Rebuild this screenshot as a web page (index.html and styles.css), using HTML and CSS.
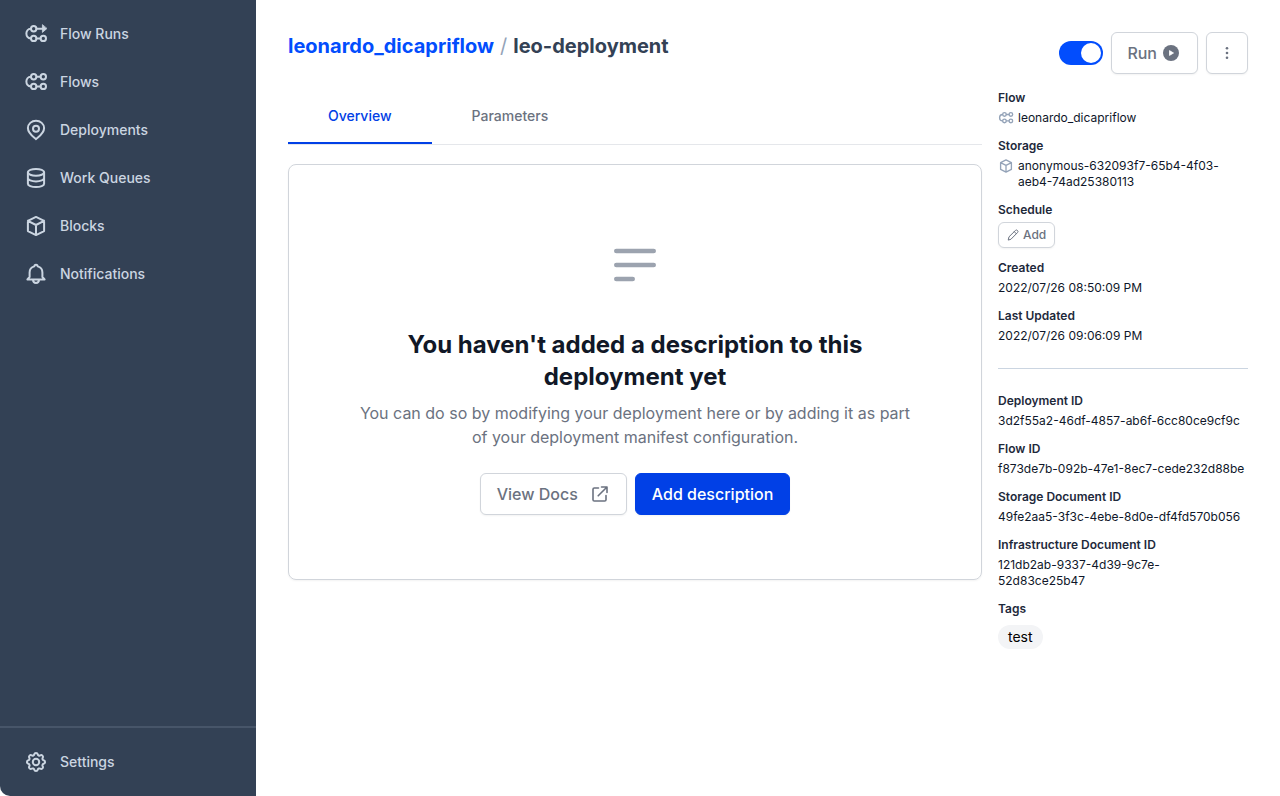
FILE: index.html
```html
<!DOCTYPE html>
<html lang="en">
<head>
<meta charset="utf-8">
<meta name="viewport" content="width=device-width, initial-scale=1">
<title>leo-deployment</title>
<link rel="stylesheet" href="styles.css">
</head>
<body>
<svg class="sprite" aria-hidden="true">
  <symbol id="flow" viewBox="0 0 24 24"><path d="M6.8 6.7C.9 6.9.9 16.2 6.8 16.4M12.6 6.7h3.8M12.6 16.4h3.8"/><circle cx="9.7" cy="6.7" r="2.7"/><circle cx="19.3" cy="6.7" r="2.7"/><circle cx="9.7" cy="16.4" r="2.7"/><circle cx="19.3" cy="16.4" r="2.7"/></symbol>
  <symbol id="flow-run" viewBox="0 0 24 24"><path d="M6.8 6.7C.9 6.9.9 16.2 6.8 16.4M12.6 6.7h6M12.6 16.4h3.8"/><path d="M18.4 3v7.400l4.300-3.700z" fill="currentColor" stroke-width=".8"/><circle cx="9.7" cy="6.7" r="2.7"/><circle cx="9.7" cy="16.4" r="2.7"/><circle cx="19.3" cy="16.4" r="2.7"/></symbol>
  <symbol id="pin" viewBox="0 0 24 24"><path d="M12 21.2c-1.2-1.5-8.1-5.2-8.1-11.100a8.1 7.400 0 0 1 16.200 0c0 5.900-6.900 9.600-8.100 11.100z"/><circle cx="12" cy="10.800" r="3"/></symbol>
  <symbol id="database" viewBox="0 0 24 24"><ellipse cx="12" cy="6.300" rx="8.100" ry="3.400"/><path d="M3.900 6.300v11.400c0 1.900 3.600 3.400 8.100 3.400s8.100-1.500 8.100-3.400V6.300M3.900 12c0 1.900 3.600 3.400 8.100 3.400s8.100-1.500 8.100-3.400"/></symbol>
  <symbol id="cube" viewBox="0 0 24 24"><path d="M12 2.900l8.100 4v10.200L12 21.100l-8.100-4V6.900zM3.900 6.900L12 11l8.100-4.100M12 11v10.100"/></symbol>
  <symbol id="bell" viewBox="0 0 24 24"><path d="M3.400 17.400h17.200L18.400 15v-4.500c0-3.200-1.800-5.300-4.700-6.100-.1-2.100-3.300-2.100-3.400 0-2.900.8-4.700 2.900-4.700 6.100V15zM9 17.600c0 4.600 6 4.600 6 0"/></symbol>
  <symbol id="gear" viewBox="0 0 24 24"><path d="M10.300 4.300c.4-1.800 3-1.800 3.400 0a1.700 1.700 0 0 0 2.600 1.100c1.500-1 3.300.8 2.400 2.400a1.700 1.700 0 0 0 1 2.500c1.800.4 1.800 3 0 3.400a1.700 1.700 0 0 0-1 2.600c.9 1.500-.9 3.300-2.400 2.400a1.700 1.700 0 0 0-2.600 1c-.4 1.800-3 1.800-3.400 0a1.700 1.700 0 0 0-2.600-1c-1.500.9-3.300-.9-2.400-2.400a1.700 1.700 0 0 0-1-2.600c-1.800-.4-1.800-3 0-3.400a1.700 1.700 0 0 0 1-2.500c-.9-1.600.9-3.400 2.400-2.400a1.700 1.700 0 0 0 2.600-1.100z"/><circle cx="12" cy="12" r="3.200"/></symbol>
</svg>

<div class="app">
  <nav class="sidebar" aria-label="Main">
    <div class="sidebar-group">
      <a class="nav-item" href="#"><svg class="icon"><use href="#flow-run"/></svg>Flow Runs</a>
      <a class="nav-item" href="#"><svg class="icon"><use href="#flow"/></svg>Flows</a>
      <a class="nav-item" href="#"><svg class="icon"><use href="#pin"/></svg>Deployments</a>
      <a class="nav-item" href="#"><svg class="icon"><use href="#database"/></svg>Work Queues</a>
      <a class="nav-item" href="#"><svg class="icon"><use href="#cube"/></svg>Blocks</a>
      <a class="nav-item" href="#"><svg class="icon"><use href="#bell"/></svg>Notifications</a>
    </div>
    <div class="sidebar-group sidebar-footer">
      <a class="nav-item" href="#"><svg class="icon"><use href="#gear"/></svg>Settings</a>
    </div>
  </nav>

  <main class="page">
    <header class="page-header">
      <h1 class="title"><a class="title-link" href="#">leonardo_dicapriflow</a><span class="title-slash">/</span>leo-deployment</h1>
      <div class="actions">
        <input class="toggle" type="checkbox" role="switch" aria-label="Deployment active" checked>
        <button class="button button-run" type="button">Run <svg class="icon-small" viewBox="0 0 16 16"><circle cx="8" cy="8" r="8" fill="currentColor"/><path d="M6.500 5.600v4.800L10.500 8z" fill="#fff" stroke="#fff" stroke-width=".8" stroke-linejoin="round"/></svg></button>
        <button class="button button-square" type="button" aria-label="More actions"><svg class="icon-small" viewBox="0 0 16 16" fill="currentColor"><circle cx="8" cy="3.300" r="1.300"/><circle cx="8" cy="8" r="1.300"/><circle cx="8" cy="12.700" r="1.300"/></svg></button>
      </div>
    </header>

    <div class="columns">
      <section class="content">
        <div class="tabs" role="tablist">
          <button class="tab tab-active" type="button" role="tab" aria-selected="true">Overview</button>
          <button class="tab" type="button" role="tab" aria-selected="false">Parameters</button>
        </div>
        <div class="card">
          <svg class="card-icon" viewBox="0 0 24 24"><path d="M4 6h16M4 12h16M4 18h7"/></svg>
          <h2 class="card-title">You haven't added a description to this deployment yet</h2>
          <p class="card-text">You can do so by modifying your deployment here or by adding it as part of your deployment manifest configuration.</p>
          <div class="card-actions">
            <a class="button button-docs" href="#">View Docs <svg class="icon-link" viewBox="0 0 20 20"><path d="M8.500 4H4.300A1.300 1.300 0 0 0 3 5.300v10.400A1.300 1.300 0 0 0 4.300 17h10.400a1.300 1.300 0 0 0 1.300-1.300v-4.200M11.500 3H17v5.500M17 3l-8.800 8.800"/></svg></a>
            <button class="button button-primary" type="button">Add description</button>
          </div>
        </div>
      </section>

      <aside class="details">
        <dl class="facts">
          <div class="fact"><dt>Flow</dt><dd class="with-icon"><svg class="icon-fact"><use href="#flow"/></svg><span>leonardo_dicapriflow</span></dd></div>
          <div class="fact"><dt>Storage</dt><dd class="with-icon"><svg class="icon-fact"><use href="#cube"/></svg><span>anonymous-632093f7-65b4-4f03-aeb4-74ad25380113</span></dd></div>
          <div class="fact"><dt>Schedule</dt><dd><button class="button button-small" type="button"><svg class="icon-pencil" viewBox="0 0 12 12"><path d="M1.300 10.700l.7-2.900L8.400 1.500a1.200 1.200 0 0 1 2.100 2.100L4.200 10zM7.300 2.700l2 2"/></svg>Add</button></dd></div>
          <div class="fact"><dt>Created</dt><dd>2022/07/26 08:50:09 PM</dd></div>
          <div class="fact"><dt>Last Updated</dt><dd>2022/07/26 09:06:09 PM</dd></div>
        </dl>
        <hr class="divider">
        <dl class="facts">
          <div class="fact"><dt>Deployment ID</dt><dd>3d2f55a2-46df-4857-ab6f-6cc80ce9cf9c</dd></div>
          <div class="fact"><dt>Flow ID</dt><dd>f873de7b-092b-47e1-8ec7-cede232d88be</dd></div>
          <div class="fact"><dt>Storage Document ID</dt><dd>49fe2aa5-3f3c-4ebe-8d0e-df4fd570b056</dd></div>
          <div class="fact"><dt>Infrastructure Document ID</dt><dd>121db2ab-9337-4d39-9c7e-52d83ce25b47</dd></div>
          <div class="fact fact-tags"><dt>Tags</dt><dd><span class="tag">test</span></dd></div>
        </dl>
      </aside>
    </div>
  </main>
</div>
</body>
</html>
```
FILE: styles.css
```css
*, *::before { box-sizing: border-box; }

body {
  margin: 0;
  background: #fff;
  color: #0f172a;
  font-family: Inter, "Liberation Sans", sans-serif;
  font-size: 16px;
  line-height: 24px;
}

h1, h2, p, dl, dd { margin: 0; }
a { color: inherit; text-decoration: none; }
button { font: inherit; cursor: pointer; }
svg { flex: none; }
.sprite { display: none; }

.app {
  display: grid;
  grid-template-columns: 256px minmax(0, 1fr);
  min-height: 100vh;
}

/* Sidebar */
.sidebar {
  display: flex;
  flex-direction: column;
  justify-content: space-between;
  background: #334155;
  color: #cbd5e1;
  border-bottom-left-radius: 10px;
}
.sidebar-group { padding: 10px 0; }
.sidebar-footer { border-top: 2px solid #475569; }
.nav-item {
  display: flex;
  align-items: center;
  gap: 12px;
  padding: 12px 24px;
  font-size: 14px;
  font-weight: 500;
}
.icon, .icon-fact, .card-icon, .icon-link, .icon-pencil {
  fill: none;
  stroke: currentColor;
  stroke-linecap: round;
  stroke-linejoin: round;
}
.icon { width: 24px; height: 24px; stroke-width: 2; }

/* Header */
.page {
  display: flex;
  flex-direction: column;
  gap: 16px;
  padding: 32px;
}
.page-header {
  display: flex;
  justify-content: space-between;
  align-items: flex-start;
}
.title {
  display: flex;
  gap: 6px;
  color: #334155;
  font-size: 20px;
  font-weight: 700;
  line-height: 28px;
}
.title-link { color: #024dfd; }
.title-slash { color: #94a3b8; font-weight: 400; }
.actions { display: flex; align-items: center; gap: 8px; }

.toggle {
  appearance: none;
  display: flex;
  width: 44px;
  height: 24px;
  margin: 0;
  padding: 2px;
  border-radius: 12px;
  background: #94a3b8;
  cursor: pointer;
}
.toggle::before {
  content: "";
  width: 20px;
  height: 20px;
  border-radius: 50%;
  background: #fff;
}
.toggle:checked { justify-content: flex-end; background: #024dfd; }

.button {
  display: inline-flex;
  align-items: center;
  justify-content: center;
  gap: 6px;
  padding: 8px 16px;
  border: 1px solid #d1d5db;
  border-radius: 6px;
  background: #fff;
  color: #6b7280;
  font-weight: 500;
  box-shadow: 0 1px 2px rgba(0, 0, 0, 0.05);
}
.button-run { padding: 8px 18px 8px 15px; }
.button-square { width: 42px; height: 42px; padding: 0; }
.button-docs { gap: 12px; }
.button-primary { border-color: #0140e6; background: #0140e6; color: #fff; }
.button-small {
  gap: 4px;
  padding: 4px 8px;
  font-size: 12px;
  line-height: 16px;
}
.icon-small { width: 16px; height: 16px; }
.icon-link { width: 20px; height: 20px; stroke-width: 1.6; }
.icon-pencil { width: 12px; height: 12px; stroke-width: 1; }

/* Content */
.columns {
  display: grid;
  grid-template-columns: minmax(0, 1fr) 250px;
  gap: 16px;
  align-items: start;
}
.content { display: flex; flex-direction: column; gap: 19px; }
.tabs { display: flex; border-bottom: 1px solid #e5e7eb; }
.tab {
  padding: 16px 40px;
  border: 0;
  border-bottom: 2px solid transparent;
  background: none;
  color: #6b7280;
  font-size: 14px;
  font-weight: 500;
  line-height: 20px;
}
.tab-active { border-color: #0140e6; color: #0140e6; }

.card {
  display: flex;
  flex-direction: column;
  align-items: center;
  padding: 72px 64px 64px;
  border: 1px solid #d1d5db;
  border-radius: 8px;
  text-align: center;
  box-shadow: 0 1px 2px rgba(0, 0, 0, 0.05);
}
.card-icon { width: 56px; height: 56px; color: #9ca3af; stroke-width: 2; }
.card-title {
  max-width: 560px;
  margin-top: 36px;
  color: #111827;
  font-size: 24px;
  font-weight: 700;
  line-height: 32px;
}
.card-text { max-width: 560px; margin-top: 8px; color: #6b7280; }
.card-actions { display: flex; gap: 8px; margin-top: 24px; }

/* Details */
.facts {
  display: flex;
  flex-direction: column;
  gap: 12px;
  font-size: 12px;
  line-height: 16px;
}
.fact { display: flex; flex-direction: column; gap: 4px; }
.fact dt { color: #1e293b; font-weight: 600; }
.fact dd { display: flex; align-items: flex-start; padding-right: 2px; }
.fact .with-icon { gap: 4px; }
.fact-tags { gap: 8px; }
.icon-fact { width: 16px; height: 16px; color: #94a3b8; stroke-width: 2; }
.divider { margin: 24px 0; border: 0; border-top: 1px solid #cbd5e1; }
.tag {
  padding: 2px 10px;
  border-radius: 12px;
  background: #f3f4f6;
  color: #000;
  font-size: 14px;
  line-height: 20px;
}
```
